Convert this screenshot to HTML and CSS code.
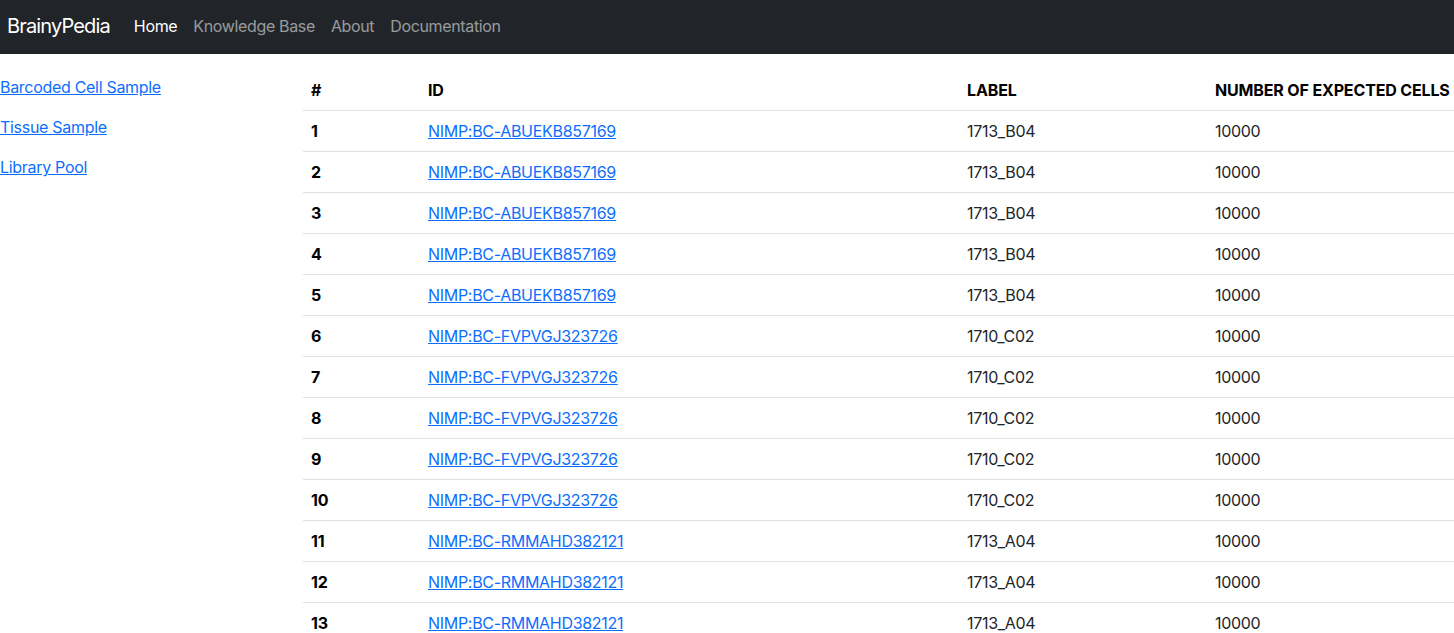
FILE: index.html
```html
<!DOCTYPE html>
<html lang="en">
<head>
<meta charset="utf-8">
<title>BrainyPedia</title>
<link rel="stylesheet" href="styles.css">
</head>
<body>
<nav class="navbar">
  <a class="brand" href="#">BrainyPedia</a>
  <ul class="nav">
    <li><a class="nav-link active" href="#">Home</a></li>
    <li><a class="nav-link" href="#">Knowledge Base</a></li>
    <li><a class="nav-link" href="#">About</a></li>
    <li><a class="nav-link" href="#">Documentation</a></li>
  </ul>
</nav>
<div class="main">
  <aside class="sidebar">
    <a href="#">Barcoded Cell Sample</a>
    <a href="#">Tissue Sample</a>
    <a href="#">Library Pool</a>
  </aside>
  <section class="content">
    <table class="table">
      <thead>
        <tr><th class="c-num">#</th><th class="c-id">ID</th><th class="c-label">LABEL</th><th class="c-cells">NUMBER OF EXPECTED CELLS</th></tr>
      </thead>
      <tbody>
        <tr><th>1</th><td><a href="#">NIMP:BC-ABUEKB857169</a></td><td>1713_B04</td><td>10000</td></tr>
        <tr><th>2</th><td><a href="#">NIMP:BC-ABUEKB857169</a></td><td>1713_B04</td><td>10000</td></tr>
        <tr><th>3</th><td><a href="#">NIMP:BC-ABUEKB857169</a></td><td>1713_B04</td><td>10000</td></tr>
        <tr><th>4</th><td><a href="#">NIMP:BC-ABUEKB857169</a></td><td>1713_B04</td><td>10000</td></tr>
        <tr><th>5</th><td><a href="#">NIMP:BC-ABUEKB857169</a></td><td>1713_B04</td><td>10000</td></tr>
        <tr><th>6</th><td><a href="#">NIMP:BC-FVPVGJ323726</a></td><td>1710_C02</td><td>10000</td></tr>
        <tr><th>7</th><td><a href="#">NIMP:BC-FVPVGJ323726</a></td><td>1710_C02</td><td>10000</td></tr>
        <tr><th>8</th><td><a href="#">NIMP:BC-FVPVGJ323726</a></td><td>1710_C02</td><td>10000</td></tr>
        <tr><th>9</th><td><a href="#">NIMP:BC-FVPVGJ323726</a></td><td>1710_C02</td><td>10000</td></tr>
        <tr><th>10</th><td><a href="#">NIMP:BC-FVPVGJ323726</a></td><td>1710_C02</td><td>10000</td></tr>
        <tr><th>11</th><td><a href="#">NIMP:BC-RMMAHD382121</a></td><td>1713_A04</td><td>10000</td></tr>
        <tr><th>12</th><td><a href="#">NIMP:BC-RMMAHD382121</a></td><td>1713_A04</td><td>10000</td></tr>
        <tr><th>13</th><td><a href="#">NIMP:BC-RMMAHD382121</a></td><td>1713_A04</td><td>10000</td></tr>
      </tbody>
    </table>
  </section>
</div>
</body>
</html>
```
FILE: styles.css
```css
html, body {
  margin: 0;
  padding: 0;
  overflow: hidden;
}
body {
  font-family: Inter, "Liberation Sans", Arial, sans-serif;
  font-size: 16px;
  line-height: 24px;
  letter-spacing: -0.3px;
  color: #212529;
  background: #fff;
}
.navbar {
  height: 54px;
  background: #212529;
  display: flex;
  align-items: center;
  padding: 0 7px 2px;
  box-sizing: border-box;
}
.brand {
  color: #fff;
  font-size: 20px;
  text-decoration: none;
  margin-right: 16px;
  letter-spacing: -0.85px;
}
.nav {
  list-style: none;
  margin: 0;
  padding: 0;
  display: flex;
}
.nav-link {
  display: block;
  padding: 8px 8px;
  color: rgba(255, 255, 255, 0.55);
  text-decoration: none;
  letter-spacing: -0.35px;
}
.nav-link.active {
  color: #fff;
}
.main {
  display: flex;
}
.sidebar {
  width: 303px;
  flex: none;
  display: flex;
  flex-direction: column;
  padding-top: 13px;
}
.sidebar a {
  color: #0d6efd;
  padding: 8px 0;
  line-height: 24px;
  align-self: flex-start;
}
.content {
  padding-top: 16px;
  flex: 1;
  min-width: 0;
}
.table {
  border-collapse: collapse;
  width: 1160px;
}
.table th, .table td {
  padding: 8px;
  text-align: left;
  border-bottom: 1px solid #dee2e6;
  vertical-align: top;
  white-space: nowrap;
}
.table th {
  font-weight: 700;
  color: #000;
  letter-spacing: -0.15px;
}
.table td {
  color: #212529;
}
.table a {
  color: #0d6efd;
}
.c-num { width: 101px; }
.c-id { width: 523px; }
.c-label { width: 232px; }
```
